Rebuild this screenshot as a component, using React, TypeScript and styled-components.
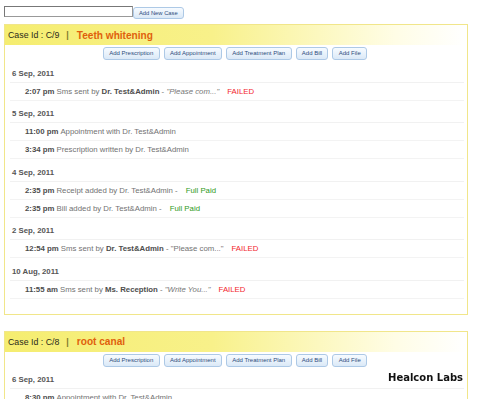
import React from 'react';
import styled, { createGlobalStyle } from 'styled-components';

type Status = 'failed' | 'paid';

type IEntry = {
  time: string;
  text: React.ReactNode;
  status?: Status;
};

type IDay = {
  date: string;
  entries: IEntry[];
};

type ICase = {
  id: string;
  title: string;
  days: IDay[];
};

const GlobalStyle = createGlobalStyle`
  body {
    margin: 0;
    background: #fff;
    font-family: "Liberation Sans", Arial, sans-serif;
  }
`;

const Page = styled.div`
  width: 464px;
  padding: 6px 12px 0 4px;
`;

const Toolbar = styled.div`
  display: flex;
  align-items: flex-start;
  height: 13px;
`;

const SearchInput = styled.input`
  box-sizing: border-box;
  width: 129px;
  height: 11px;
  margin: 0;
  padding: 0 2px;
  border: 1px solid #999;
  border-top-color: #777;
  border-left-color: #777;
  font-size: 7px;
`;

const Button = styled.button`
  box-sizing: border-box;
  height: 13px;
  margin: 0;
  padding: 0 5.3px;
  border: 1px solid #adc9e6;
  border-radius: 3px;
  background: linear-gradient(#f7fbff, #dbe9f7);
  color: #2d4c7c;
  font-family: "Liberation Sans", Arial, sans-serif;
  font-size: 6px;
  line-height: 11px;
  white-space: nowrap;
  cursor: pointer;
`;

const NewCaseButton = styled(Button)`
  margin: 1px 0 0 0;
  height: 12px;
  padding: 0 5px;
  font-size: 5.8px;
  line-height: 10px;
`;

const CasePanel = styled.div`
  margin-top: 5px;
  margin-bottom: 16px;
  border: 1px solid #f1e68a;
  padding-bottom: 15px;
`;

const CaseHeader = styled.div`
  display: flex;
  align-items: center;
  height: 20px;
  margin-right: 2px;
  padding-left: 3px;
  background: linear-gradient(to right, #f5ed70 0%, #f8f18a 45%, #fffde6 85%, #ffffff 100%);
`;

const CaseId = styled.span`
  color: #2a2a1a;
  font-size: 8.8px;
`;

const Divider = styled.span`
  margin: 0 8px 0 7px;
  color: #7d7a2c;
  font-size: 8.8px;
  font-weight: bold;
`;

const CaseTitle = styled.span`
  color: #e0600c;
  font-size: 10.1px;
  font-weight: bold;
`;

const ActionRow = styled.div`
  display: flex;
  justify-content: center;
  gap: 4px;
  margin: 2px 2px 2px 0;
`;

const DayGroup = styled.div`
  margin-top: 4.5px;
  &:first-of-type {
    margin-top: 0;
  }
`;

const DateLabel = styled.div`
  height: 17px;
  padding-left: 7px;
  color: #555;
  font-size: 7.8px;
  font-weight: bold;
  line-height: 17px;
`;

const EntryList = styled.div`
  margin: 0 3px 0 5px;
  border-top: 1px solid #f1f1f1;
`;

const Entry = styled.div`
  box-sizing: border-box;
  height: 18px;
  padding-left: 15px;
  border-bottom: 1px solid #f3f3f3;
  color: #727272;
  font-size: 7.8px;
  line-height: 17px;
  white-space: nowrap;
`;

const Time = styled.b`
  margin-right: 2px;
  color: #4d4d4d;
`;

const Who = styled.b`
  color: #4d4d4d;
`;

const Quote = styled.i`
  color: #777;
`;

const StatusText = styled.span<{ $kind: Status }>`
  margin-left: 8px;
  color: ${(p) => (p.$kind === 'failed' ? '#f2262e' : '#2f9a23')};
`;

const Watermark = styled.div`
  position: fixed;
  top: 372px;
  right: 17px;
  color: #111;
  font-family: "DejaVu Sans", Verdana, sans-serif;
  font-size: 10px;
  font-weight: bold;
`;

const ACTIONS = ['Add Prescription', 'Add Appointment', 'Add Treatment Plan', 'Add Bill', 'Add File'];

const sms = (who: string, quote: string, italic = true) => (
  <>
    Sms sent by <Who>{who}</Who> - {italic ? <Quote>"{quote}"</Quote> : `"${quote}"`}
  </>
);

const CASES: ICase[] = [
  {
    id: 'C/9',
    title: 'Teeth whitening',
    days: [
      { date: '6 Sep, 2011', entries: [{ time: '2:07 pm', text: sms('Dr. Test&Admin', 'Please com...'), status: 'failed' }] },
      {
        date: '5 Sep, 2011',
        entries: [
          { time: '11:00 pm', text: 'Appointment with Dr. Test&Admin' },
          { time: '3:34 pm', text: 'Prescription written by Dr. Test&Admin' },
        ],
      },
      {
        date: '4 Sep, 2011',
        entries: [
          { time: '2:35 pm', text: 'Receipt added by Dr. Test&Admin -', status: 'paid' },
          { time: '2:35 pm', text: 'Bill added by Dr. Test&Admin -', status: 'paid' },
        ],
      },
      { date: '2 Sep, 2011', entries: [{ time: '12:54 pm', text: sms('Dr. Test&Admin', 'Please com...', false), status: 'failed' }] },
      { date: '10 Aug, 2011', entries: [{ time: '11:55 am', text: sms('Ms. Reception', 'Write You...'), status: 'failed' }] },
    ],
  },
  {
    id: 'C/8',
    title: 'root canal',
    days: [
      {
        date: '6 Sep, 2011',
        entries: [
          { time: '8:30 pm', text: 'Appointment with Dr. Test&Admin' },
          { time: '8:12 pm', text: 'Prescription written by Dr. Test&Admin' },
        ],
      },
    ],
  },
];

function CaseCard({ item }: { item: ICase }): JSX.Element {
  return (
    <CasePanel>
      <CaseHeader>
        <CaseId>Case Id : {item.id}</CaseId>
        <Divider>|</Divider>
        <CaseTitle>{item.title}</CaseTitle>
      </CaseHeader>
      <ActionRow>
        {ACTIONS.map((a) => (
          <Button key={a}>{a}</Button>
        ))}
      </ActionRow>
      {item.days.map((day) => (
        <DayGroup key={day.date}>
          <DateLabel>{day.date}</DateLabel>
          <EntryList>
            {day.entries.map((e, i) => (
              <Entry key={i}>
                <Time>{e.time}</Time>
                {e.text}
                {e.status && <StatusText $kind={e.status}>{e.status === 'failed' ? 'FAILED' : 'Full Paid'}</StatusText>}
              </Entry>
            ))}
          </EntryList>
        </DayGroup>
      ))}
    </CasePanel>
  );
}

export default function App(): JSX.Element {
  return (
    <>
      <GlobalStyle />
      <Page>
        <Toolbar>
          <SearchInput type="text" />
          <NewCaseButton>Add New Case</NewCaseButton>
        </Toolbar>
        {CASES.map((c) => (
          <CaseCard key={c.id} item={c} />
        ))}
      </Page>
      <Watermark>Healcon Labs</Watermark>
    </>
  );
}
